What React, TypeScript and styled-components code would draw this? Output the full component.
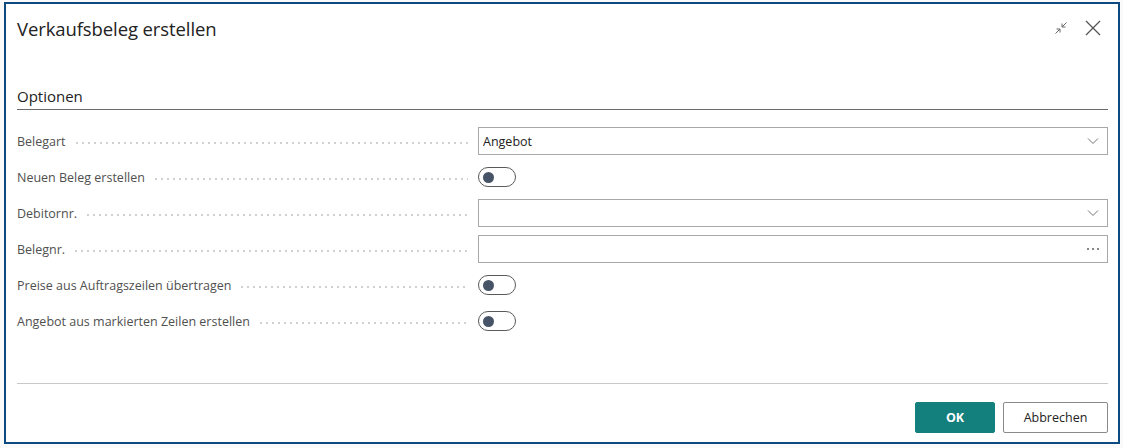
import React from "react";
import styled, { createGlobalStyle } from "styled-components";

const Global = createGlobalStyle`
  html, body { margin: 0; padding: 0; background: #ffffff; }
  body { font-family: "Open Sans", "Noto Sans", sans-serif; }
  * { box-sizing: border-box; }
`;

const Page = styled.div`
  width: 1123px;
  height: 448px;
  padding: 2px 3px 4px 4px;
  background: #fafafa;
`;

const Dialog = styled.div`
  width: 1116px;
  height: 442px;
  border: 2px solid #0d4a80;
  background: #ffffff;
  display: flex;
  flex-direction: column;
  padding: 0 10px 0 11px;
`;

const Header = styled.div`
  display: flex;
  align-items: center;
  justify-content: space-between;
  height: 48px;
`;

const Title = styled.h1`
  margin: 0;
  font-size: 18.5px;
  font-weight: 400;
  color: #222222;
  letter-spacing: -0.1px;
`;

const HeaderIcons = styled.div`
  display: flex;
  align-items: center;
  gap: 16px;
  margin-right: 7px;
`;

const IconButton = styled.span`
  display: inline-flex;
  width: 16px;
  height: 16px;
  align-items: center;
  justify-content: center;
`;

const Section = styled.div`
  margin-top: 34px;
  flex: 1;
`;

const SectionTitle = styled.div`
  font-size: 15px;
  color: #222222;
  padding-bottom: 3px;
  border-bottom: 1px solid #6b6b6b;
`;

const Fields = styled.div`
  display: flex;
  flex-direction: column;
  gap: 8px;
  margin-top: 17px;
`;

const Row = styled.div`
  display: grid;
  grid-template-columns: 461px 1fr;
  align-items: center;
  height: 28px;
`;

const LabelCell = styled.div`
  display: flex;
  align-items: center;
  padding-right: 10px;
  font-size: 12.5px;
  color: #505050;
  white-space: nowrap;
`;

const Leader = styled.span`
  flex: 1;
  margin-left: 8px;
  height: 2px;
  margin-top: 3px;
  background-image: radial-gradient(circle, #cfcfcf 0.7px, transparent 0.9px);
  background-size: 6px 2px;
  background-repeat: repeat-x;
`;

const Input = styled.div`
  height: 28px;
  border: 1px solid #a8a8a8;
  display: flex;
  align-items: center;
  justify-content: space-between;
  padding: 0 8px 0 4px;
  font-size: 12.5px;
  color: #222222;
`;

const Toggle = styled.span`
  width: 38px;
  height: 20px;
  border: 1px solid #5a5a5a;
  border-radius: 10px;
  display: flex;
  align-items: center;
  padding-left: 4px;
`;

const Knob = styled.span`
  width: 11px;
  height: 11px;
  border-radius: 50%;
  background: #475467;
`;

const Footer = styled.div`
  border-top: 1px solid #c8c8c8;
  display: flex;
  justify-content: flex-end;
  gap: 8px;
  padding: 18px 0 0 0;
  height: 59px;
`;

const Button = styled.button<{ $primary?: boolean }>`
  height: 31px;
  font-family: inherit;
  font-size: 12.5px;
  cursor: pointer;
  padding: 0;
  width: ${(p) => (p.$primary ? "80px" : "105px")};
  background: ${(p) => (p.$primary ? "#13807d" : "#ffffff")};
  color: ${(p) => (p.$primary ? "#ffffff" : "#222222")};
  font-weight: ${(p) => (p.$primary ? 700 : 400)};
  border: 1px solid ${(p) => (p.$primary ? "#13807d" : "#8a8a8a")};
  border-radius: 2px;
`;

const Chevron = () => (
  <svg width="12" height="8" viewBox="0 0 12 8">
    <path d="M1 1.5 L6 6.5 L11 1.5" fill="none" stroke="#777" strokeWidth="1" />
  </svg>
);

const Dots = () => (
  <svg width="12" height="4" viewBox="0 0 12 4">
    <rect x="0" y="1" width="2" height="2" fill="#888" />
    <rect x="5" y="1" width="2" height="2" fill="#888" />
    <rect x="10" y="1" width="2" height="2" fill="#888" />
  </svg>
);

type Field = { label: string; kind: "select" | "toggle" | "lookup"; value?: string };

const fields: Field[] = [
  { label: "Belegart", kind: "select", value: "Angebot" },
  { label: "Neuen Beleg erstellen", kind: "toggle" },
  { label: "Debitornr.", kind: "select" },
  { label: "Belegnr.", kind: "lookup" },
  { label: "Preise aus Auftragszeilen übertragen", kind: "toggle" },
  { label: "Angebot aus markierten Zeilen erstellen", kind: "toggle" },
];

export default function App() {
  return (
    <>
      <Global />
      <Page>
        <Dialog>
          <Header>
            <Title>Verkaufsbeleg erstellen</Title>
            <HeaderIcons>
              <IconButton>
                <svg width="14" height="14" viewBox="0 0 14 14" fill="none" stroke="#666" strokeWidth="1">
                  <path d="M1.5 12.5 L6 8" />
                  <path d="M2.5 8 H6 V11.5" />
                  <path d="M12.5 1.5 L8 6" />
                  <path d="M8 2.5 V6 H11.5" />
                </svg>
              </IconButton>
              <IconButton>
                <svg width="16" height="16" viewBox="0 0 16 16" fill="none" stroke="#555" strokeWidth="1.3">
                  <path d="M1 1 L15 15 M15 1 L1 15" />
                </svg>
              </IconButton>
            </HeaderIcons>
          </Header>
          <Section>
            <SectionTitle>Optionen</SectionTitle>
            <Fields>
              {fields.map((f) => (
                <Row key={f.label}>
                  <LabelCell>
                    {f.label}
                    <Leader />
                  </LabelCell>
                  {f.kind === "toggle" ? (
                    <div>
                      <Toggle>
                        <Knob />
                      </Toggle>
                    </div>
                  ) : (
                    <Input>
                      <span>{f.value ?? ""}</span>
                      {f.kind === "select" ? <Chevron /> : <Dots />}
                    </Input>
                  )}
                </Row>
              ))}
            </Fields>
          </Section>
          <Footer>
            <Button $primary>OK</Button>
            <Button>Abbrechen</Button>
          </Footer>
        </Dialog>
      </Page>
    </>
  );
}
